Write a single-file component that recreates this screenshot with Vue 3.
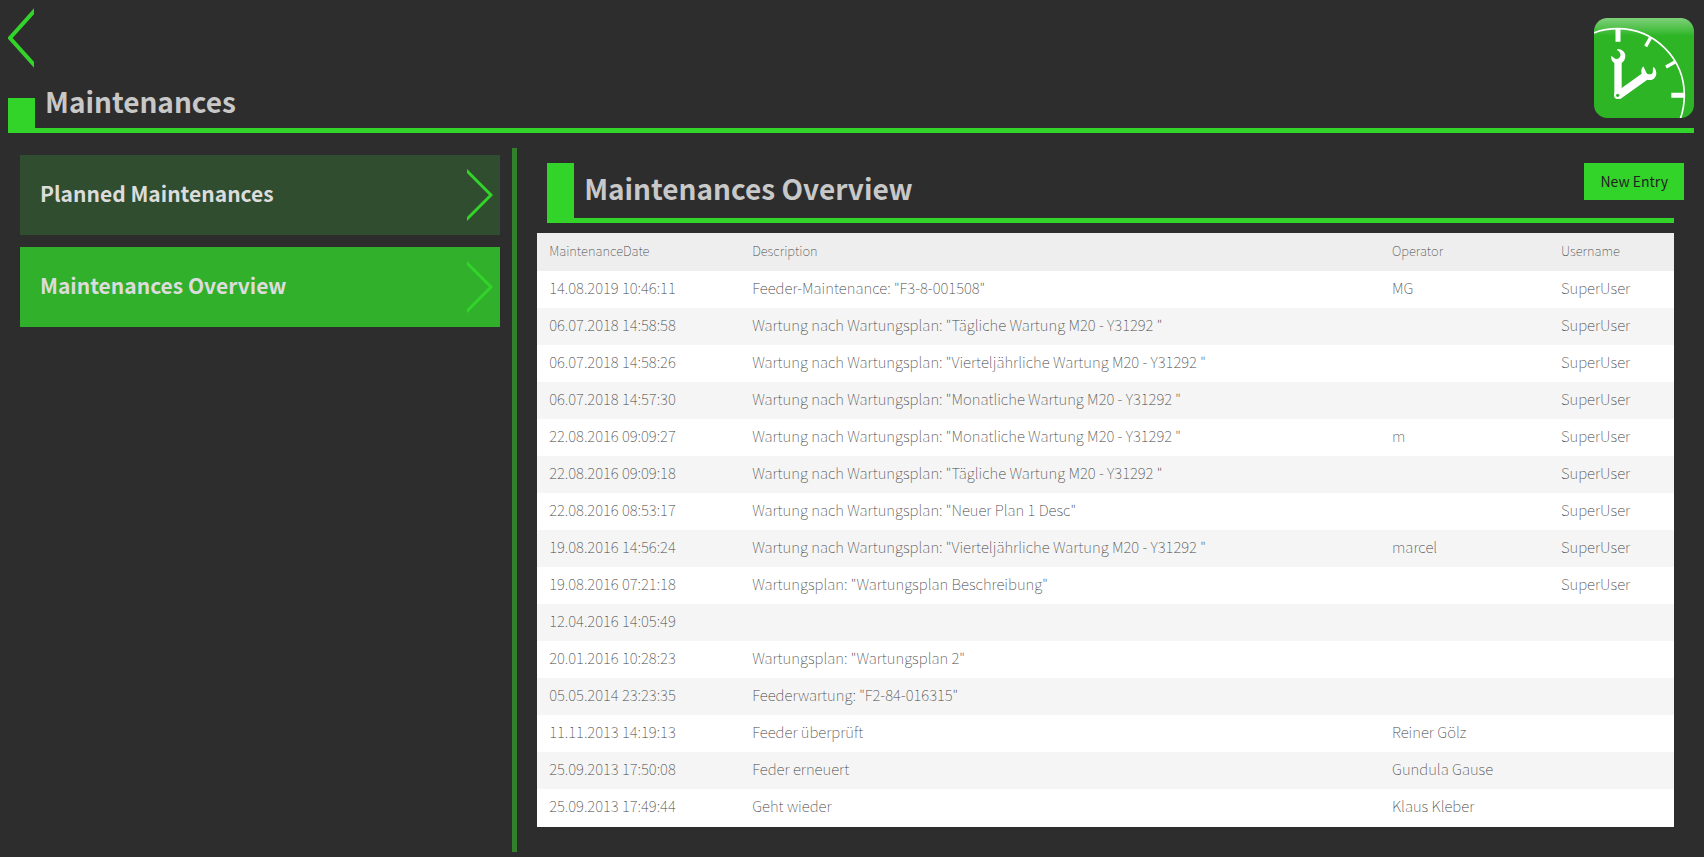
<script setup>
const menu = [
  { label: 'Planned Maintenances', active: false },
  { label: 'Maintenances Overview', active: true },
]

const plan = (name) => `Wartung nach Wartungsplan: "${name}"`

const rows = [
  ['14.08.2019 10:46:11', 'Feeder-Maintenance: "F3-8-001508"', 'MG', 'SuperUser'],
  ['06.07.2018 14:58:58', plan('Tägliche Wartung M20 - Y31292 '), '', 'SuperUser'],
  ['06.07.2018 14:58:26', plan('Vierteljährliche Wartung M20 - Y31292 '), '', 'SuperUser'],
  ['06.07.2018 14:57:30', plan('Monatliche Wartung M20 - Y31292 '), '', 'SuperUser'],
  ['22.08.2016 09:09:27', plan('Monatliche Wartung M20 - Y31292 '), 'm', 'SuperUser'],
  ['22.08.2016 09:09:18', plan('Tägliche Wartung M20 - Y31292 '), '', 'SuperUser'],
  ['22.08.2016 08:53:17', plan('Neuer Plan 1 Desc'), '', 'SuperUser'],
  ['19.08.2016 14:56:24', plan('Vierteljährliche Wartung M20 - Y31292 '), 'marcel', 'SuperUser'],
  ['19.08.2016 07:21:18', 'Wartungsplan: "Wartungsplan Beschreibung"', '', 'SuperUser'],
  ['12.04.2016 14:05:49', '', '', ''],
  ['20.01.2016 10:28:23', 'Wartungsplan: "Wartungsplan 2"', '', ''],
  ['05.05.2014 23:23:35', 'Feederwartung: "F2-84-016315"', '', ''],
  ['11.11.2013 14:19:13', 'Feeder überprüft', 'Reiner Gölz', ''],
  ['25.09.2013 17:50:08', 'Feder erneuert', 'Gundula Gause', ''],
  ['25.09.2013 17:49:44', 'Geht wieder', 'Klaus Kleber', ''],
]
</script>

<template>
  <div class="page">
    <header class="top">
      <div class="top-left">
        <button class="back" type="button" aria-label="Back">
          <svg width="26" height="60" viewBox="0 0 26 60" aria-hidden="true">
            <path d="M28 1 2 30 28 59" />
          </svg>
        </button>
        <div class="title-row">
          <span class="block"></span>
          <h1>Maintenances</h1>
        </div>
      </div>
      <svg class="logo" width="100" height="100" viewBox="0 0 300 300" aria-hidden="true">
        <defs>
          <linearGradient id="shine" x1="0" y1="0" x2="0" y2="1">
            <stop offset="0" stop-color="#7fd079" />
            <stop offset="0.18" stop-color="#2db526" />
          </linearGradient>
          <clipPath id="tile"><rect width="300" height="300" rx="40" /></clipPath>
        </defs>
        <rect width="300" height="300" rx="40" fill="url(#shine)" />
        <g clip-path="url(#tile)" fill="none" stroke="#fff">
          <circle cx="71" cy="232" r="200" stroke-width="5" />
          <path d="M72 33V71M232 231.500H270" stroke-width="15" />
          <path d="M170 58 155 85M243 132 216 147" stroke-width="10" />
        </g>
        <g fill="#fff">
          <path d="M70 93C84 93 94 102 94 114 94 124 89 131 83 135V232H61V135C54 130 50 122 52 113L61 121C67 125 77 122 79 114 81 107 76 99 69 97Z" />
          <path d="M148 145C141 152 141 160 143 167L62 225 78 244 160 185C175 190 187 180 187 165 186 156 183 149 177 147L176 165C172 171 160 170 157 164Z" />
          <circle cx="71" cy="232" r="11" />
        </g>
        <circle cx="71" cy="232" r="5" fill="#2db526" />
      </svg>
    </header>

    <div class="content">
      <nav class="menu">
        <a v-for="m in menu" :key="m.label" href="#" :class="['item', { active: m.active }]">
          <span>{{ m.label }}</span>
          <svg width="26" height="52" viewBox="0 0 26 52" aria-hidden="true">
            <path d="M-2 0 24 26-2 52" />
          </svg>
        </a>
      </nav>

      <main class="panel">
        <div class="panel-head">
          <div class="panel-title">
            <span class="block"></span>
            <h2>Maintenances Overview</h2>
          </div>
          <button class="new" type="button">New Entry</button>
        </div>
        <table>
          <colgroup>
            <col class="c-date" />
            <col class="c-desc" />
            <col class="c-op" />
            <col class="c-user" />
          </colgroup>
          <thead>
            <tr>
              <th scope="col">MaintenanceDate</th>
              <th scope="col">Description</th>
              <th scope="col">Operator</th>
              <th scope="col">Username</th>
            </tr>
          </thead>
          <tbody>
            <tr v-for="r in rows" :key="r[0]">
              <td v-for="(c, i) in r" :key="i">{{ c }}</td>
            </tr>
          </tbody>
        </table>
      </main>
    </div>
  </div>
</template>

<style>
body {
  background: #2d2d2d;
}
</style>

<style scoped>
.page {
  box-sizing: border-box;
  min-height: 100vh;
  padding: 8px 10px 5px 8px;
  display: flex;
  flex-direction: column;
  gap: 15px;
  background: #2d2d2d;
  color: #c8c8c8;
  font-family: "Noto Sans CJK SC", "Noto Sans", sans-serif;
}
.top {
  display: flex;
  justify-content: space-between;
  align-items: flex-start;
  border-bottom: 5px solid #33d42a;
}
.top-left {
  display: flex;
  flex-direction: column;
}
.back {
  width: 26px;
  height: 60px;
  padding: 0;
  border: 0;
  background: none;
  cursor: pointer;
}
.back svg,
.item svg {
  display: block;
  fill: none;
  stroke: #33d42a;
  stroke-width: 4;
}
.item svg {
  stroke-width: 3;
}
.title-row {
  display: flex;
  align-items: flex-end;
  gap: 10px;
  height: 60px;
}
.title-row .block {
  width: 27px;
  height: 30px;
}
.block {
  background: #33d42a;
}
h1,
h2 {
  margin: 0;
  font-size: 28px;
  font-weight: 700;
  line-height: 40px;
}
h1 {
  padding-bottom: 7px;
}
h2 {
  padding-bottom: 6px;
}
.logo {
  margin: 10px 0;
}
.content {
  flex: 1;
  display: flex;
}
.menu {
  box-sizing: border-box;
  width: 30.2%;
  padding: 7px 12px 0;
  border-right: 5px solid #30802c;
  display: flex;
  flex-direction: column;
  gap: 12px;
}
.item {
  display: flex;
  align-items: center;
  justify-content: space-between;
  height: 80px;
  padding: 0 7px 0 20px;
  box-sizing: border-box;
  background: #304d2f;
  color: #dcdcdc;
  font-size: 21px;
  font-weight: 700;
  line-height: 32px;
  text-decoration: none;
}
.item span {
  padding-bottom: 4px;
}
.item.active {
  background: #31b02c;
}
.panel {
  flex: 1;
  padding: 15px 20px 0;
}
.panel-head {
  display: flex;
  align-items: flex-start;
  height: 60px;
  margin: 0 0 10px 10px;
  box-sizing: border-box;
  border-bottom: 5px solid #33d42a;
}
.panel-title {
  flex: 1;
  display: flex;
  align-items: center;
  gap: 10px;
  height: 55px;
}
.panel-title .block {
  width: 27px;
  height: 55px;
}
.new {
  height: 37px;
  margin-right: -10px;
  padding: 0 16px 2px;
  border: 0;
  background: #33d42a;
  color: #222;
  font-family: inherit;
  font-size: 14px;
  cursor: pointer;
}
table {
  width: 100%;
  table-layout: fixed;
  border-collapse: separate;
  border-spacing: 0;
  border-bottom: 1px solid #fff;
  background: #fff;
  color: #444;
}
.c-date {
  width: 203px;
}
.c-op {
  width: 169px;
}
.c-user {
  width: 125px;
}
th,
td {
  box-sizing: border-box;
  height: 37px;
  padding: 0 12px 3px;
  font-size: 15px;
  font-weight: 100;
  line-height: 20px;
  text-align: left;
}
th {
  height: 38px;
  font-size: 13px;
}
thead tr {
  background: #eee;
}
tbody tr:nth-child(even) {
  background: #f5f5f5;
}
</style>
